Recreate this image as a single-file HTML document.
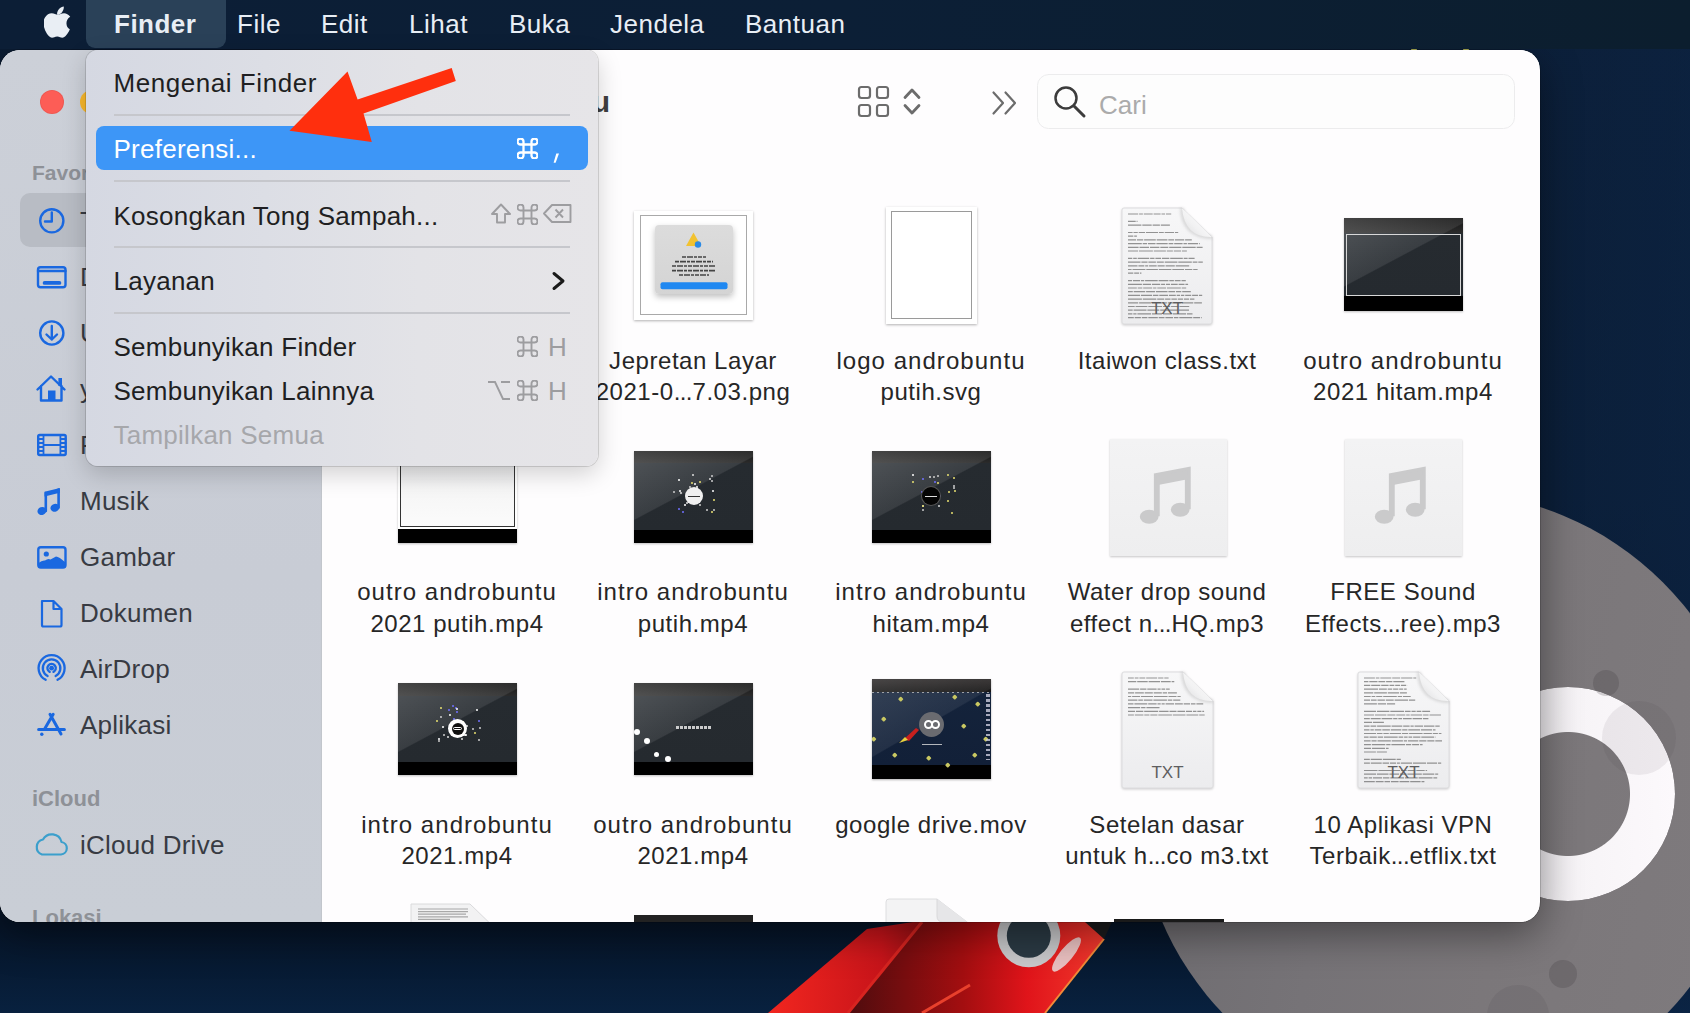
<!DOCTYPE html>
<html><head><meta charset="utf-8">
<style>
*{margin:0;padding:0;box-sizing:border-box}
html,body{width:1690px;height:1013px;overflow:hidden}
body{position:relative;font-family:"Liberation Sans",sans-serif;background:linear-gradient(90deg,rgba(13,38,72,0) 0px,rgba(13,38,72,0) 1300px,rgba(13,38,72,0.55) 1690px),linear-gradient(180deg,#0b1c33 0px,#0a1b31 500px,#061427 922px,#08213f 1013px)}
.abs{position:absolute}
#menubar{position:absolute;left:0;top:0;width:1690px;height:49px;background:linear-gradient(90deg,#0c1e36,#0c1f36 50%,#0c1e2e)}
.mb{position:absolute;top:9px;font-size:26px;line-height:30px;color:#e8eef5;white-space:nowrap;letter-spacing:0.5px}
#finderhl{position:absolute;left:86px;top:0;width:140px;height:48px;border-radius:0 0 9px 9px;background:#2a4158}
#win{position:absolute;left:0;top:50px;width:1540px;height:872px;border-radius:20px;overflow:hidden;background:#fefdfe;box-shadow:0 12px 40px rgba(0,0,0,0.42),0 0 0 1px rgba(0,0,0,0.15)}
#side{position:absolute;left:0;top:0;width:322px;border-right:1px solid #c2c6cc;height:872px;background:linear-gradient(180deg,#ccd0d8,#c8ccd5 60%,#c9ced6)}
.st{position:absolute;left:80px;font-size:26px;line-height:30px;color:#383b43;white-space:nowrap;letter-spacing:0.25px}
.sh{position:absolute;left:32px;font-size:21px;font-weight:bold;line-height:24px;color:#8e9197;white-space:nowrap}
.lbl{position:absolute;width:236px;text-align:center;font-size:24px;line-height:32.5px;color:#262626;white-space:nowrap;letter-spacing:0.55px}
.lbl i{font-style:normal;letter-spacing:-0.6px;margin-right:0.6px}
#menu{position:absolute;left:86px;top:50px;width:512px;height:416px;border-radius:12px;background:linear-gradient(90deg,#d5d8e2 0%,#dcdee5 35%,#e3e3e7 65%,#e6e5e8 100%);box-shadow:0 0 0 1px rgba(0,0,0,0.13),0 8px 24px rgba(0,0,0,0.18)}
.mi{position:absolute;left:27.5px;font-size:26px;line-height:30px;color:#1f1f22;white-space:nowrap;letter-spacing:0.25px}
.sep{position:absolute;left:28px;width:456px;height:2px;background:#c6c7cc}
</style></head><body>

<!-- moon -->
<div class="abs" style="left:1137px;top:492px;width:616px;height:616px;border-radius:50%;background:linear-gradient(100deg,#6c6a6e 0%,#767377 35%,#7b777a 60%,#7f7b7e 100%)"></div>


<div class="abs" style="left:1461px;top:687px;width:214px;height:214px;border-radius:50%;background:linear-gradient(90deg,#dcd9dd 0%,#ebe8ec 30%,#f7f4f7 55%,#fcf9fc 100%);-webkit-mask:radial-gradient(circle at center,transparent 61.5px,#000 62.5px)"></div>
<div class="abs" style="left:1602px;top:701px;width:74px;height:74px;border-radius:50%;background:rgba(50,46,50,0.075)"></div>
<div class="abs" style="left:1411px;top:46px;width:6px;height:5px;border-radius:2px;background:#c8c860"></div><div class="abs" style="left:1463px;top:46px;width:6px;height:5px;border-radius:2px;background:#c8c860"></div>
<div class="abs" style="left:1592.5px;top:670px;width:26px;height:26px;border-radius:50%;background:rgba(50,46,50,0.2)"></div>
<div class="abs" style="left:1549px;top:960px;width:28px;height:28px;border-radius:50%;background:rgba(50,46,50,0.2)"></div>
<div class="abs" style="left:1487px;top:985px;width:62px;height:62px;border-radius:50%;background:rgba(50,46,50,0.09)"></div>
<svg class="abs" style="left:700px;top:880px" width="560" height="140">
  <defs>
    <linearGradient id="rkf" x1="0" y1="0" x2="1" y2="0"><stop offset="0" stop-color="#f2261f"/><stop offset="0.55" stop-color="#c8141a"/><stop offset="1" stop-color="#5c0a0c"/></linearGradient>
    <linearGradient id="rkb" x1="0" y1="0" x2="1" y2="0"><stop offset="0" stop-color="#4e0c0e"/><stop offset="0.45" stop-color="#a30e10"/><stop offset="0.7" stop-color="#e0141a"/><stop offset="1" stop-color="#f23a2e"/></linearGradient>
  </defs>
  <polygon points="68,133 167,49 213,42 275,42 200,133" fill="url(#rkf)"/>
  <polygon points="148,133 222,42 395,42 404,59 345,133" fill="url(#rkb)"/>
  <path d="M222 42 L148 133" stroke="#d82420" stroke-width="3"/>
  <path d="M404 59 L345 133" stroke="#f28a38" stroke-width="2"/>
  <path d="M270 105 L222 133" stroke="#e8402c" stroke-width="3"/>
  <polygon points="385,42 412,42 404,59" fill="#1c1c1e"/>
  <circle cx="328.8" cy="55.8" r="31.5" fill="#c9c9cb"/>
  <circle cx="328.8" cy="55.8" r="22" fill="#2b3a44"/>
  <ellipse cx="366.5" cy="74.4" rx="6.5" ry="21.5" transform="rotate(39 366.5 74.4)" fill="#ead2d2" opacity="0.9"/>
</svg>
<!-- window -->
<div id="win">
  <div id="content" class="abs" style="left:322px;top:0;width:1217px;height:872px;background:#fefdfe"></div>
  <div class="abs" style="left:420px;top:35px;width:190px;text-align:right;font-size:30px;font-weight:bold;line-height:34px;color:#3f3f3f">Terbaru</div>
  <svg class="abs" style="left:0;top:0" width="1540" height="120" fill="none" stroke="#6c6c6c" stroke-linecap="round" stroke-linejoin="round">
    <rect x="859" y="37" width="11" height="11" rx="2.5" stroke-width="2.2"/>
    <rect x="877" y="37" width="11" height="11" rx="2.5" stroke-width="2.2"/>
    <rect x="859" y="55" width="11" height="11" rx="2.5" stroke-width="2.2"/>
    <rect x="877" y="55" width="11" height="11" rx="2.5" stroke-width="2.2"/>
    <path d="M905 47.5 L912 40 L919 47.5 M905 55.5 L912 63 L919 55.5" stroke-width="2.8"/>
    <path d="M993.5 42.5 L1003 53 L993.5 63.5 M1005.5 42.5 L1015 53 L1005.5 63.5" stroke-width="2.2"/>
    <rect x="1037.5" y="24.5" width="477" height="54" rx="11" fill="#fdfdfd" stroke="#ececed" stroke-width="1"/>
    <circle cx="1066" cy="48" r="10.5" stroke="#3c3c3c" stroke-width="2.5"/>
    <path d="M1074 56 L1084 66" stroke="#3c3c3c" stroke-width="3"/>
  </svg>
  <div class="abs" style="left:1099px;top:40px;font-size:26px;line-height:30px;color:#ababab">Cari</div>
<div class="lbl" style="left:575px;top:294.6px">Jepretan Layar</div>
<div class="lbl" style="left:575px;top:326.1px">2021-0<i>...</i>7.03.png</div>
<div class="lbl" style="left:813px;top:294.6px;letter-spacing:1.05px">logo androbuntu</div>
<div class="lbl" style="left:813px;top:326.1px">putih.svg</div>
<div class="lbl" style="left:1049px;top:294.6px">Itaiwon class.txt</div>
<div class="lbl" style="left:1285px;top:294.6px;letter-spacing:1.05px">outro androbuntu</div>
<div class="lbl" style="left:1285px;top:326.1px">2021 hitam.mp4</div>
<div class="lbl" style="left:339px;top:526.4px;letter-spacing:1.05px">outro androbuntu</div>
<div class="lbl" style="left:339px;top:557.8px">2021 putih.mp4</div>
<div class="lbl" style="left:575px;top:526.4px;letter-spacing:1.05px">intro androbuntu</div>
<div class="lbl" style="left:575px;top:557.8px">putih.mp4</div>
<div class="lbl" style="left:813px;top:526.4px;letter-spacing:1.05px">intro androbuntu</div>
<div class="lbl" style="left:813px;top:557.8px">hitam.mp4</div>
<div class="lbl" style="left:1049px;top:526.4px">Water drop sound</div>
<div class="lbl" style="left:1049px;top:557.8px">effect n<i>...</i>HQ.mp3</div>
<div class="lbl" style="left:1285px;top:526.4px">FREE Sound</div>
<div class="lbl" style="left:1285px;top:557.8px">Effects<i>...</i>ree).mp3</div>
<div class="lbl" style="left:339px;top:758.6px;letter-spacing:1.05px">intro androbuntu</div>
<div class="lbl" style="left:339px;top:790.1px">2021.mp4</div>
<div class="lbl" style="left:575px;top:758.6px;letter-spacing:1.05px">outro androbuntu</div>
<div class="lbl" style="left:575px;top:790.1px">2021.mp4</div>
<div class="lbl" style="left:813px;top:758.6px">google drive.mov</div>
<div class="lbl" style="left:1049px;top:758.6px">Setelan dasar</div>
<div class="lbl" style="left:1049px;top:790.1px">untuk h<i>...</i>co m3.txt</div>
<div class="lbl" style="left:1285px;top:758.6px">10 Aplikasi VPN</div>
<div class="lbl" style="left:1285px;top:790.1px">Terbaik<i>...</i>etflix.txt</div>
<div class="abs" style="left:634px;top:161px;width:119px;height:109px;background:#fff;box-shadow:0 1px 2.5px rgba(0,0,0,0.3)">
<div class="abs" style="left:6px;top:4px;width:107px;height:100px;border:1px solid #a9a9a9;background:#fff"></div>
<div class="abs" style="left:21px;top:14px;width:78px;height:69px;border-radius:4px;background:linear-gradient(180deg,#dcdcdc,#d4d4d4);box-shadow:0 3px 6px rgba(0,0,0,0.25)">
<svg class="abs" style="left:0;top:0" width="78" height="69"><path d="M38.5 7.5 L46 21 H31 Z" fill="#f2c230"/><circle cx="43" cy="19.5" r="3.2" fill="#2a8ae6"/>
<path d="M27 32 H51 M20 36.6 H58 M17 41 H61 M17 45.6 H61 M24 50 H54" stroke="#444" stroke-width="1.6" stroke-dasharray="4 1 6 1 3 1"/>
<rect x="5.5" y="57.2" width="67" height="7" rx="2" fill="#1f88f1"/></svg></div></div>
<div class="abs" style="left:886px;top:157px;width:91px;height:117px;background:#fff;box-shadow:0 1px 2.5px rgba(0,0,0,0.3)">
<div class="abs" style="left:5px;top:4px;width:81px;height:108px;border:1px solid #9a9a9a"></div></div>
<svg class="abs" style="left:1121px;top:156px;overflow:visible" width="92" height="119"><defs><linearGradient id="pg1121206" x1="0" y1="0" x2="0" y2="1"><stop offset="0" stop-color="#f7f7f8"/><stop offset="1" stop-color="#ececee"/></linearGradient><linearGradient id="fl1121206" x1="1" y1="0" x2="0" y2="1"><stop offset="0" stop-color="#ffffff"/><stop offset="0.6" stop-color="#f2f2f3"/><stop offset="1" stop-color="#d9d9db"/></linearGradient></defs><path d="M3 2 H61 L91 31 V116 Q91 118 89 118 H3 Q1 118 1 116 V4 Q1 2 3 2 Z" fill="url(#pg1121206)" stroke="#dcdcde" stroke-width="1" style="filter:drop-shadow(0 1px 1px rgba(0,0,0,0.18))"/><path d="M7.0 8.0 H17.2 M18.1 8.0 H21.9 M22.8 8.0 H31.7 M32.6 8.0 H39.6 M40.5 8.0 H44.1 M45.0 8.0 H50.2 M7.0 15.4 H14.7 M15.6 15.4 H16.5 M7.0 19.1 H20.4 M21.3 19.1 H30.7 M31.6 19.1 H38.9 M39.8 19.1 H48.9 M7.0 26.5 H11.6 M12.5 26.5 H16.8 M17.7 26.5 H24.1 M25.0 26.5 H37.0 M37.9 26.5 H42.8 M43.7 26.5 H53.1 M54.0 26.5 H57.2 M7.0 30.2 H12.3 M13.2 30.2 H15.9 M7.0 33.9 H15.0 M15.9 33.9 H22.2 M23.1 33.9 H34.8 M35.7 33.9 H46.4 M47.3 33.9 H53.0 M53.9 33.9 H63.2 M64.1 33.9 H70.8 M7.0 37.6 H20.8 M21.7 37.6 H26.0 M26.9 37.6 H34.5 M35.4 37.6 H46.7 M47.6 37.6 H52.3 M53.2 37.6 H61.6 M62.5 37.6 H65.9 M66.8 37.6 H77.1 M78.0 37.6 H78.8 M7.0 41.3 H17.6 M18.5 41.3 H28.1 M29.0 41.3 H38.4 M39.3 41.3 H47.3 M48.2 41.3 H60.4 M61.3 41.3 H74.7 M75.6 41.3 H81.6 M7.0 45.0 H17.1 M18.0 45.0 H31.9 M32.8 45.0 H44.9 M45.8 45.0 H51.9 M52.8 45.0 H60.1 M61.0 45.0 H65.9 M7.0 52.4 H11.3 M12.2 52.4 H15.8 M16.7 52.4 H28.2 M29.1 52.4 H33.5 M34.4 52.4 H40.1 M41.0 52.4 H48.3 M49.2 52.4 H61.8 M62.7 52.4 H66.6 M67.5 52.4 H73.6 M7.0 56.1 H19.5 M20.4 56.1 H26.5 M27.4 56.1 H34.9 M35.8 56.1 H42.8 M43.7 56.1 H56.4 M57.3 56.1 H70.8 M71.7 56.1 H76.4 M77.3 56.1 H81.8 M7.0 59.8 H16.5 M17.4 59.8 H23.3 M24.2 59.8 H27.2 M28.1 59.8 H35.7 M36.6 59.8 H43.7 M44.6 59.8 H53.8 M54.7 59.8 H68.2 M69.1 59.8 H69.2 M7.0 63.5 H10.6 M11.5 63.5 H24.4 M25.3 63.5 H36.9 M37.8 63.5 H50.4 M51.3 63.5 H63.1 M64.0 63.5 H71.3 M72.2 63.5 H76.6 M7.0 67.2 H12.3 M13.2 67.2 H18.0 M18.9 67.2 H20.4 M7.0 74.6 H11.1 M12.0 74.6 H19.0 M19.9 74.6 H23.2 M24.1 74.6 H36.7 M37.6 74.6 H47.4 M48.3 74.6 H52.9 M53.8 74.6 H59.6 M60.5 74.6 H64.8 M7.0 78.3 H20.9 M21.8 78.3 H30.0 M30.9 78.3 H39.2 M40.1 78.3 H44.0 M44.9 78.3 H49.0 M49.9 78.3 H56.7 M57.6 78.3 H63.5 M64.4 78.3 H67.1 M7.0 82.0 H15.8 M16.7 82.0 H21.3 M22.2 82.0 H31.2 M32.1 82.0 H35.4 M36.3 82.0 H45.1 M46.0 82.0 H59.8 M60.7 82.0 H65.2 M7.0 85.7 H11.8 M12.7 85.7 H24.2 M25.1 85.7 H34.0 M34.9 85.7 H46.5 M47.4 85.7 H54.0 M54.9 85.7 H60.3 M61.2 85.7 H69.8 M7.0 89.4 H19.0 M19.9 89.4 H31.0 M31.9 89.4 H37.4 M38.3 89.4 H47.0 M47.9 89.4 H54.8 M55.7 89.4 H59.1 M60.0 89.4 H63.3 M64.2 89.4 H70.2 M71.1 89.4 H77.0 M77.9 89.4 H81.2 M7.0 93.1 H20.9 M21.8 93.1 H35.3 M36.2 93.1 H43.2 M44.1 93.1 H49.5 M50.4 93.1 H55.9 M56.8 93.1 H62.0 M62.9 93.1 H68.1 M69.0 93.1 H73.4 M7.0 96.8 H17.2 M18.1 96.8 H29.9 M30.8 96.8 H34.7 M35.6 96.8 H45.9 M46.8 96.8 H59.8 M60.7 96.8 H72.3 M73.2 96.8 H80.9 M7.0 100.5 H13.7 M14.6 100.5 H26.4 M27.3 100.5 H41.0 M41.9 100.5 H49.2 M50.1 100.5 H57.5 M58.4 100.5 H68.2 M7.0 104.2 H11.7 M12.6 104.2 H25.5 M26.4 104.2 H38.3 M39.2 104.2 H43.8 M44.7 104.2 H56.8 M57.7 104.2 H68.0 M7.0 107.9 H11.4 M12.3 107.9 H15.5 M16.4 107.9 H30.1 M31.0 107.9 H41.1 M42.0 107.9 H50.8 M51.7 107.9 H65.0 M65.9 107.9 H71.5 M7.0 111.6 H12.8 M13.7 111.6 H19.9 M20.8 111.6 H26.4 M27.3 111.6 H36.8 M37.7 111.6 H43.5 M44.4 111.6 H52.1 M53.0 111.6 H57.4 M58.3 111.6 H71.3 M72.2 111.6 H79.1 M80.0 111.6 H80.7 " stroke="#6a6a6a" stroke-width="1.2" opacity="0.7"/><path d="M61 2 Q62 30 91 31" fill="none" stroke="rgba(0,0,0,0.12)" stroke-width="4" style="filter:blur(1.5px)"/><path d="M61 2 L91 31 Q64 32 61 2 Z" fill="url(#fl1121206)"/><text x="46.0" y="108" text-anchor="middle" font-family="Liberation Sans" font-size="17" fill="#5e5e60">TXT</text></svg>
<div class="abs" style="left:1344px;top:168px;width:119px;height:93px;box-shadow:0 1px 2px rgba(0,0,0,0.25);overflow:hidden"><div class="abs" style="left:0;top:0;width:119px;height:93px;background:linear-gradient(180deg,#151515 0,#2b2b2b 15px,#262b30 15px,#252a2f 78px,#000 78px,#000 100%)"></div><div class="abs" style="left:0;top:0;width:119px;height:78px;background:linear-gradient(152deg,rgba(255,255,255,0.2) 0%,rgba(255,255,255,0.09) 48%,rgba(255,255,255,0) 49%)"></div><div class="abs" style="left:2px;top:16px;width:115px;height:62px;border:1.5px solid #d8d8d8"></div></div>
<div class="abs" style="left:398px;top:416px;width:119px;height:77px;box-shadow:0 1px 2px rgba(0,0,0,0.25);overflow:hidden"><div class="abs" style="left:0;top:0;width:119px;height:63px;background:#fff"></div><div class="abs" style="left:2px;top:0;width:115px;height:61px;border:1.5px solid #333;border-top:none;background:linear-gradient(180deg,#e9e9ea,#f6f6f6 40%,#fbfbfb)"></div><div class="abs" style="left:0;top:63px;width:119px;height:14px;background:#000"></div></div>
<div class="abs" style="left:634px;top:401px;width:119px;height:92px;box-shadow:0 1px 2px rgba(0,0,0,0.25);overflow:hidden"><div class="abs" style="left:0;top:0;width:119px;height:92px;background:linear-gradient(180deg,#151515 0,#2b2b2b 12px,#262b30 12px,#252a2f 79px,#000 79px,#000 100%)"></div><div class="abs" style="left:0;top:0;width:119px;height:79px;background:linear-gradient(152deg,rgba(255,255,255,0.2) 0%,rgba(255,255,255,0.09) 48%,rgba(255,255,255,0) 49%)"></div><div class="abs" style="left:78px;top:39px;width:1.5px;height:1.5px;opacity:.75;background:#fff"></div><div class="abs" style="left:44px;top:28px;width:1.5px;height:1.5px;opacity:.75;background:#fff"></div><div class="abs" style="left:39px;top:40px;width:1.5px;height:1.5px;opacity:.75;background:#ccc"></div><div class="abs" style="left:65px;top:53px;width:1.5px;height:1.5px;opacity:.75;background:#ccc"></div><div class="abs" style="left:46px;top:41px;width:1.5px;height:1.5px;opacity:.75;background:#ddd"></div><div class="abs" style="left:62px;top:35px;width:1.5px;height:1.5px;opacity:.75;background:#fff"></div><div class="abs" style="left:61px;top:41px;width:1.5px;height:1.5px;opacity:.75;background:#ddd"></div><div class="abs" style="left:77px;top:24px;width:1.5px;height:1.5px;opacity:.75;background:#ccc"></div><div class="abs" style="left:50px;top:53px;width:1.5px;height:1.5px;opacity:.75;background:#fff"></div><div class="abs" style="left:58px;top:23px;width:1.5px;height:1.5px;opacity:.75;background:#ddd"></div><div class="abs" style="left:58px;top:47px;width:1.5px;height:1.5px;opacity:.75;background:#fff"></div><div class="abs" style="left:65px;top:30px;width:1.5px;height:1.5px;opacity:.75;background:#e8e070"></div><div class="abs" style="left:58px;top:43px;width:1.5px;height:1.5px;opacity:.75;background:#7070ff"></div><div class="abs" style="left:60px;top:32px;width:1.5px;height:1.5px;opacity:.75;background:#fff"></div><div class="abs" style="left:77px;top:60px;width:1.5px;height:1.5px;opacity:.75;background:#e8e070"></div><div class="abs" style="left:79px;top:58px;width:1.5px;height:1.5px;opacity:.75;background:#ccc"></div><div class="abs" style="left:75px;top:27px;width:1.5px;height:1.5px;opacity:.75;background:#ddd"></div><div class="abs" style="left:55px;top:35px;width:1.5px;height:1.5px;opacity:.75;background:#ccc"></div><div class="abs" style="left:57px;top:31px;width:1.5px;height:1.5px;opacity:.75;background:#e8e070"></div><div class="abs" style="left:72px;top:58px;width:1.5px;height:1.5px;opacity:.75;background:#ccc"></div><div class="abs" style="left:79px;top:48px;width:1.5px;height:1.5px;opacity:.75;background:#e8e070"></div><div class="abs" style="left:44px;top:57px;width:1.5px;height:1.5px;opacity:.75;background:#7070ff"></div><div class="abs" style="left:48px;top:60px;width:1.5px;height:1.5px;opacity:.75;background:#7070ff"></div><div class="abs" style="left:77px;top:29px;width:1.5px;height:1.5px;opacity:.75;background:#ccc"></div><div class="abs" style="left:45px;top:39px;width:1.5px;height:1.5px;opacity:.75;background:#fff"></div><div class="abs" style="left:56px;top:39px;width:1.5px;height:1.5px;opacity:.75;background:#e8e070"></div><div class="abs" style="left:52px;top:51px;width:1.5px;height:1.5px;opacity:.75;background:#ddd"></div><div class="abs" style="left:53px;top:40px;width:1.5px;height:1.5px;opacity:.75;background:#ddd"></div><div class="abs" style="left:51px;top:36px;width:18px;height:18px;border-radius:50%;background:#f0f0f0"></div><div class="abs" style="left:54px;top:44.5px;width:12px;height:1.5px;background:#333"></div></div>
<div class="abs" style="left:872px;top:401px;width:119px;height:92px;box-shadow:0 1px 2px rgba(0,0,0,0.25);overflow:hidden"><div class="abs" style="left:0;top:0;width:119px;height:92px;background:linear-gradient(180deg,#151515 0,#2b2b2b 12px,#262b30 12px,#252a2f 79px,#000 79px,#000 100%)"></div><div class="abs" style="left:0;top:0;width:119px;height:79px;background:linear-gradient(152deg,rgba(255,255,255,0.2) 0%,rgba(255,255,255,0.09) 48%,rgba(255,255,255,0) 49%)"></div><div class="abs" style="left:55px;top:43px;width:1.5px;height:1.5px;opacity:.75;background:#e8e070"></div><div class="abs" style="left:61px;top:25px;width:1.5px;height:1.5px;opacity:.75;background:#ccc"></div><div class="abs" style="left:81px;top:26px;width:1.5px;height:1.5px;opacity:.75;background:#e8e070"></div><div class="abs" style="left:50px;top:58px;width:1.5px;height:1.5px;opacity:.75;background:#ccc"></div><div class="abs" style="left:50px;top:27px;width:1.5px;height:1.5px;opacity:.75;background:#7070ff"></div><div class="abs" style="left:75px;top:49px;width:1.5px;height:1.5px;opacity:.75;background:#e8e070"></div><div class="abs" style="left:56px;top:43px;width:1.5px;height:1.5px;opacity:.75;background:#fff"></div><div class="abs" style="left:63px;top:50px;width:1.5px;height:1.5px;opacity:.75;background:#ddd"></div><div class="abs" style="left:50px;top:54px;width:1.5px;height:1.5px;opacity:.75;background:#ccc"></div><div class="abs" style="left:57px;top:25px;width:1.5px;height:1.5px;opacity:.75;background:#ddd"></div><div class="abs" style="left:66px;top:54px;width:1.5px;height:1.5px;opacity:.75;background:#ddd"></div><div class="abs" style="left:65px;top:31px;width:1.5px;height:1.5px;opacity:.75;background:#e8e070"></div><div class="abs" style="left:76px;top:40px;width:1.5px;height:1.5px;opacity:.75;background:#e8e070"></div><div class="abs" style="left:82px;top:39px;width:1.5px;height:1.5px;opacity:.75;background:#e8e070"></div><div class="abs" style="left:65px;top:24px;width:1.5px;height:1.5px;opacity:.75;background:#ccc"></div><div class="abs" style="left:79px;top:61px;width:1.5px;height:1.5px;opacity:.75;background:#e8e070"></div><div class="abs" style="left:40px;top:30px;width:1.5px;height:1.5px;opacity:.75;background:#e8e070"></div><div class="abs" style="left:66px;top:43px;width:1.5px;height:1.5px;opacity:.75;background:#ccc"></div><div class="abs" style="left:51px;top:42px;width:1.5px;height:1.5px;opacity:.75;background:#ccc"></div><div class="abs" style="left:50px;top:54px;width:1.5px;height:1.5px;opacity:.75;background:#e8e070"></div><div class="abs" style="left:40px;top:23px;width:1.5px;height:1.5px;opacity:.75;background:#fff"></div><div class="abs" style="left:62px;top:30px;width:1.5px;height:1.5px;opacity:.75;background:#7070ff"></div><div class="abs" style="left:49px;top:40px;width:1.5px;height:1.5px;opacity:.75;background:#7070ff"></div><div class="abs" style="left:67px;top:44px;width:1.5px;height:1.5px;opacity:.75;background:#7070ff"></div><div class="abs" style="left:81px;top:34px;width:1.5px;height:1.5px;opacity:.75;background:#ccc"></div><div class="abs" style="left:81px;top:36px;width:1.5px;height:1.5px;opacity:.75;background:#ccc"></div><div class="abs" style="left:56px;top:36px;width:1.5px;height:1.5px;opacity:.75;background:#ddd"></div><div class="abs" style="left:75px;top:23px;width:1.5px;height:1.5px;opacity:.75;background:#e8e070"></div><div class="abs" style="left:50px;top:36px;width:18px;height:18px;border-radius:50%;background:#050505;box-shadow:0 0 0 1px #555"></div><div class="abs" style="left:53px;top:44.5px;width:12px;height:1.5px;background:#ddd"></div></div>
<div class="abs" style="left:1110px;top:389px;width:117px;height:117px;background:linear-gradient(180deg,#f3f3f4,#eeeeef);box-shadow:0 1px 2px rgba(0,0,0,0.22)"><svg class="abs" style="left:0;top:0" width="117" height="117"><g fill="#cacacb" stroke="#cacacb"><path d="M46.800000000000004 77.22 V36.855 L77.805 31.005000000000003 V70.2" fill="none" stroke-width="5.8500000000000005"/><path d="M46.800000000000004 36.855 L77.805 31.005000000000003 V40.364999999999995 L46.800000000000004 46.215 Z" stroke="none"/><ellipse cx="39.195" cy="77.805" rx="9.36" ry="7.02" stroke="none"/><ellipse cx="70.2" cy="70.785" rx="9.36" ry="7.02" stroke="none"/></g></svg></div>
<div class="abs" style="left:1345px;top:389px;width:117px;height:117px;background:linear-gradient(180deg,#f3f3f4,#eeeeef);box-shadow:0 1px 2px rgba(0,0,0,0.22)"><svg class="abs" style="left:0;top:0" width="117" height="117"><g fill="#cacacb" stroke="#cacacb"><path d="M46.800000000000004 77.22 V36.855 L77.805 31.005000000000003 V70.2" fill="none" stroke-width="5.8500000000000005"/><path d="M46.800000000000004 36.855 L77.805 31.005000000000003 V40.364999999999995 L46.800000000000004 46.215 Z" stroke="none"/><ellipse cx="39.195" cy="77.805" rx="9.36" ry="7.02" stroke="none"/><ellipse cx="70.2" cy="70.785" rx="9.36" ry="7.02" stroke="none"/></g></svg></div>
<div class="abs" style="left:398px;top:633px;width:119px;height:92px;box-shadow:0 1px 2px rgba(0,0,0,0.25);overflow:hidden"><div class="abs" style="left:0;top:0;width:119px;height:92px;background:linear-gradient(180deg,#151515 0,#2b2b2b 13px,#262b30 13px,#252a2f 79px,#000 79px,#000 100%)"></div><div class="abs" style="left:0;top:0;width:119px;height:79px;background:linear-gradient(152deg,rgba(255,255,255,0.2) 0%,rgba(255,255,255,0.09) 48%,rgba(255,255,255,0) 49%)"></div><div class="abs" style="left:57px;top:24px;width:1.5px;height:1.5px;opacity:.75;background:#7070ff"></div><div class="abs" style="left:76px;top:49px;width:1.5px;height:1.5px;opacity:.75;background:#e8e070"></div><div class="abs" style="left:64px;top:50px;width:1.5px;height:1.5px;opacity:.75;background:#ddd"></div><div class="abs" style="left:58px;top:28px;width:1.5px;height:1.5px;opacity:.75;background:#7070ff"></div><div class="abs" style="left:38px;top:37px;width:1.5px;height:1.5px;opacity:.75;background:#e8e070"></div><div class="abs" style="left:81px;top:44px;width:1.5px;height:1.5px;opacity:.75;background:#ccc"></div><div class="abs" style="left:40px;top:57px;width:1.5px;height:1.5px;opacity:.75;background:#ccc"></div><div class="abs" style="left:54px;top:22px;width:1.5px;height:1.5px;opacity:.75;background:#7070ff"></div><div class="abs" style="left:42px;top:33px;width:1.5px;height:1.5px;opacity:.75;background:#ccc"></div><div class="abs" style="left:49px;top:53px;width:1.5px;height:1.5px;opacity:.75;background:#ddd"></div><div class="abs" style="left:50px;top:26px;width:1.5px;height:1.5px;opacity:.75;background:#7070ff"></div><div class="abs" style="left:64px;top:38px;width:1.5px;height:1.5px;opacity:.75;background:#e8e070"></div><div class="abs" style="left:51px;top:31px;width:1.5px;height:1.5px;opacity:.75;background:#fff"></div><div class="abs" style="left:80px;top:56px;width:1.5px;height:1.5px;opacity:.75;background:#ccc"></div><div class="abs" style="left:67px;top:51px;width:1.5px;height:1.5px;opacity:.75;background:#fff"></div><div class="abs" style="left:55px;top:35px;width:1.5px;height:1.5px;opacity:.75;background:#7070ff"></div><div class="abs" style="left:45px;top:51px;width:1.5px;height:1.5px;opacity:.75;background:#ccc"></div><div class="abs" style="left:40px;top:55px;width:1.5px;height:1.5px;opacity:.75;background:#fff"></div><div class="abs" style="left:66px;top:51px;width:1.5px;height:1.5px;opacity:.75;background:#fff"></div><div class="abs" style="left:44px;top:43px;width:1.5px;height:1.5px;opacity:.75;background:#fff"></div><div class="abs" style="left:63px;top:55px;width:1.5px;height:1.5px;opacity:.75;background:#ddd"></div><div class="abs" style="left:74px;top:45px;width:1.5px;height:1.5px;opacity:.75;background:#ccc"></div><div class="abs" style="left:42px;top:24px;width:1.5px;height:1.5px;opacity:.75;background:#e8e070"></div><div class="abs" style="left:80px;top:37px;width:1.5px;height:1.5px;opacity:.75;background:#7070ff"></div><div class="abs" style="left:63px;top:47px;width:1.5px;height:1.5px;opacity:.75;background:#fff"></div><div class="abs" style="left:68px;top:42px;width:1.5px;height:1.5px;opacity:.75;background:#ddd"></div><div class="abs" style="left:58px;top:25px;width:1.5px;height:1.5px;opacity:.75;background:#fff"></div><div class="abs" style="left:78px;top:26px;width:1.5px;height:1.5px;opacity:.75;background:#fff"></div><div class="abs" style="left:50px;top:36px;width:19px;height:19px;border-radius:50%;background:#fff"></div><div class="abs" style="left:53.5px;top:39.5px;width:12px;height:12px;border-radius:50%;background:#111"></div><div class="abs" style="left:55px;top:44px;width:9px;height:3px;border:1px solid #fff;border-radius:2px"></div></div>
<div class="abs" style="left:634px;top:633px;width:119px;height:92px;box-shadow:0 1px 2px rgba(0,0,0,0.25);overflow:hidden"><div class="abs" style="left:0;top:0;width:119px;height:92px;background:linear-gradient(180deg,#151515 0,#2b2b2b 13px,#262b30 13px,#252a2f 79px,#000 79px,#000 100%)"></div><div class="abs" style="left:0;top:0;width:119px;height:79px;background:linear-gradient(152deg,rgba(255,255,255,0.2) 0%,rgba(255,255,255,0.09) 48%,rgba(255,255,255,0) 49%)"></div><div class="abs" style="left:42px;top:43px;width:36px;height:3px;background:repeating-linear-gradient(90deg,#ddd 0 3px,transparent 3px 4px);opacity:.9"></div><div class="abs" style="left:0px;top:46px;width:6px;height:6px;border-radius:50%;background:#fff"></div><div class="abs" style="left:10px;top:55px;width:6px;height:6px;border-radius:50%;background:#fff"></div><div class="abs" style="left:20px;top:69px;width:5px;height:5px;border-radius:50%;background:#fff"></div><div class="abs" style="left:31px;top:73px;width:6px;height:6px;border-radius:50%;background:#fff"></div></div>
<div class="abs" style="left:872px;top:629px;width:119px;height:100px;background:linear-gradient(180deg,#2b2828 0,#161515 13px,#14233b 13px,#122038 86px,#010101 86px);box-shadow:0 1px 2px rgba(0,0,0,0.3);overflow:hidden">
<div class="abs" style="left:0;top:0;width:119px;height:86px;background:linear-gradient(150deg,rgba(255,255,255,0.14) 0%,rgba(255,255,255,0.07) 50%,rgba(255,255,255,0) 51%)"></div><div class="abs" style="left:26.9px;top:18.0px;width:3.5px;height:3.5px;background:#c9c862;border-radius:1px;transform:rotate(45deg)"></div><div class="abs" style="left:80.8px;top:16.2px;width:3.5px;height:3.5px;background:#c9c862;border-radius:1px;transform:rotate(45deg)"></div><div class="abs" style="left:104.4px;top:22.8px;width:3.5px;height:3.5px;background:#c9c862;border-radius:1px;transform:rotate(45deg)"></div><div class="abs" style="left:10.3px;top:38.2px;width:3.5px;height:3.5px;background:#c9c862;border-radius:1px;transform:rotate(45deg)"></div><div class="abs" style="left:90.2px;top:45.3px;width:3.5px;height:3.5px;background:#c9c862;border-radius:1px;transform:rotate(45deg)"></div><div class="abs" style="left:0.2px;top:57.7px;width:3.5px;height:3.5px;background:#c9c862;border-radius:1px;transform:rotate(45deg)"></div><div class="abs" style="left:20.9px;top:74.3px;width:3.5px;height:3.5px;background:#c9c862;border-radius:1px;transform:rotate(45deg)"></div><div class="abs" style="left:54.7px;top:76.6px;width:3.5px;height:3.5px;background:#c9c862;border-radius:1px;transform:rotate(45deg)"></div><div class="abs" style="left:74.2px;top:83.8px;width:3.5px;height:3.5px;background:#c9c862;border-radius:1px;transform:rotate(45deg)"></div><div class="abs" style="left:100.9px;top:74.3px;width:3.5px;height:3.5px;background:#c9c862;border-radius:1px;transform:rotate(45deg)"></div><div class="abs" style="left:111.5px;top:57.7px;width:3.5px;height:3.5px;background:#c9c862;border-radius:1px;transform:rotate(45deg)"></div>
<div class="abs" style="left:0;top:12.5px;width:119px;height:1px;background:repeating-linear-gradient(90deg,#bbb 0 2px,transparent 2px 5px);opacity:.8"></div>
<div class="abs" style="left:114px;top:15px;width:4px;height:66px;background:repeating-linear-gradient(180deg,#ccd 0 2.5px,transparent 2.5px 5px);opacity:.8"></div>
<div class="abs" style="left:47.3px;top:32.5px;width:25px;height:25px;border-radius:50%;background:#6a6b70"></div>
<div class="abs" style="left:52px;top:40.5px;width:9px;height:9px;border-radius:50%;border:2px solid #fff"></div><div class="abs" style="left:59px;top:40.5px;width:9px;height:9px;border-radius:50%;border:2px solid #fff"></div>
<svg class="abs" style="left:0;top:0" width="119" height="100"><path d="M32 60 L44 49 L47 51 L37 62 Z" fill="#c8201e"/><path d="M27 64 L33 58 L36 61 Z" fill="#e8d040"/></svg>
<div class="abs" style="left:50px;top:64.5px;width:20px;height:1.5px;background:#ddd;opacity:.8"></div></div>
<svg class="abs" style="left:1121px;top:620px;overflow:visible" width="93" height="119"><defs><linearGradient id="pg1121670" x1="0" y1="0" x2="0" y2="1"><stop offset="0" stop-color="#f7f7f8"/><stop offset="1" stop-color="#ececee"/></linearGradient><linearGradient id="fl1121670" x1="1" y1="0" x2="0" y2="1"><stop offset="0" stop-color="#ffffff"/><stop offset="0.6" stop-color="#f2f2f3"/><stop offset="1" stop-color="#d9d9db"/></linearGradient></defs><path d="M3 2 H62 L92 31 V116 Q92 118 90 118 H3 Q1 118 1 116 V4 Q1 2 3 2 Z" fill="url(#pg1121670)" stroke="#dcdcde" stroke-width="1" style="filter:drop-shadow(0 1px 1px rgba(0,0,0,0.18))"/><path d="M7.0 8.0 H12.8 M13.7 8.0 H17.5 M18.4 8.0 H24.3 M25.2 8.0 H36.2 M37.1 8.0 H42.4 M43.3 8.0 H47.6 M7.0 11.7 H15.3 M16.2 11.7 H26.7 M27.6 11.7 H39.0 M39.9 11.7 H49.7 M50.6 11.7 H53.3 M7.0 19.1 H18.2 M19.1 19.1 H25.4 M26.3 19.1 H35.6 M36.5 19.1 H39.6 M40.5 19.1 H44.2 M45.1 19.1 H48.7 M7.0 22.8 H13.2 M14.1 22.8 H22.8 M23.7 22.8 H31.8 M32.7 22.8 H40.8 M41.7 22.8 H46.0 M46.9 22.8 H55.9 M7.0 26.5 H10.2 M11.1 26.5 H19.1 M20.0 26.5 H32.1 M33.0 26.5 H46.6 M47.5 26.5 H55.5 M56.4 26.5 H59.7 M7.0 30.2 H16.4 M17.3 30.2 H21.9 M22.8 30.2 H31.5 M32.4 30.2 H45.9 M46.8 30.2 H51.3 M52.2 30.2 H59.3 M7.0 33.9 H12.5 M13.4 33.9 H26.3 M27.2 33.9 H35.6 M36.5 33.9 H39.7 M40.6 33.9 H43.7 M44.6 33.9 H53.0 M53.9 33.9 H61.8 M62.7 33.9 H69.1 M70.0 33.9 H74.5 M75.4 33.9 H82.2 M7.0 37.6 H19.2 M20.1 37.6 H24.5 M25.4 37.6 H38.5 M7.0 41.3 H14.1 M15.0 41.3 H22.3 M23.2 41.3 H37.2 M38.1 41.3 H47.6 M48.5 41.3 H55.5 M56.4 41.3 H64.1 M65.0 41.3 H71.0 M71.9 41.3 H75.4 M76.3 41.3 H80.4 M81.3 41.3 H83.1 M7.0 45.0 H12.9 M13.8 45.0 H22.4 M23.3 45.0 H28.4 M29.3 45.0 H36.4 M37.3 45.0 H50.9 M51.8 45.0 H64.5 M65.4 45.0 H77.3 M78.2 45.0 H83.7 " stroke="#6a6a6a" stroke-width="1.2" opacity="0.7"/><path d="M62 2 Q63 30 92 31" fill="none" stroke="rgba(0,0,0,0.12)" stroke-width="4" style="filter:blur(1.5px)"/><path d="M62 2 L92 31 Q65 32 62 2 Z" fill="url(#fl1121670)"/><text x="46.5" y="108" text-anchor="middle" font-family="Liberation Sans" font-size="17" fill="#5e5e60">TXT</text></svg>
<svg class="abs" style="left:1357px;top:620px;overflow:visible" width="93" height="119"><defs><linearGradient id="pg1357670" x1="0" y1="0" x2="0" y2="1"><stop offset="0" stop-color="#f7f7f8"/><stop offset="1" stop-color="#ececee"/></linearGradient><linearGradient id="fl1357670" x1="1" y1="0" x2="0" y2="1"><stop offset="0" stop-color="#ffffff"/><stop offset="0.6" stop-color="#f2f2f3"/><stop offset="1" stop-color="#d9d9db"/></linearGradient></defs><path d="M3 2 H62 L92 31 V116 Q92 118 90 118 H3 Q1 118 1 116 V4 Q1 2 3 2 Z" fill="url(#pg1357670)" stroke="#dcdcde" stroke-width="1" style="filter:drop-shadow(0 1px 1px rgba(0,0,0,0.18))"/><path d="M7.0 8.0 H17.9 M18.8 8.0 H22.4 M23.3 8.0 H34.3 M35.2 8.0 H43.2 M44.1 8.0 H55.4 M56.3 8.0 H59.2 M7.0 11.7 H11.4 M12.3 11.7 H20.5 M21.4 11.7 H28.2 M29.1 11.7 H35.4 M36.3 11.7 H47.4 M7.0 15.4 H13.3 M14.2 15.4 H23.3 M24.2 15.4 H31.6 M32.5 15.4 H37.3 M38.2 15.4 H43.0 M43.9 15.4 H49.2 M50.1 15.4 H50.2 M7.0 19.1 H21.0 M21.9 19.1 H29.8 M30.7 19.1 H35.2 M36.1 19.1 H41.3 M42.2 19.1 H46.2 M47.1 19.1 H49.7 M7.0 22.8 H16.3 M17.2 22.8 H29.9 M30.8 22.8 H42.1 M43.0 22.8 H49.9 M7.0 26.5 H13.7 M14.6 26.5 H18.3 M19.2 26.5 H25.3 M26.2 26.5 H39.8 M40.7 26.5 H45.1 M46.0 26.5 H53.7 M7.0 30.2 H13.0 M13.9 30.2 H19.6 M20.5 30.2 H27.9 M28.8 30.2 H36.7 M37.6 30.2 H51.1 M52.0 30.2 H58.2 M7.0 33.9 H19.9 M20.8 33.9 H29.0 M29.9 33.9 H38.1 M7.0 41.3 H19.1 M20.0 41.3 H32.4 M33.3 41.3 H47.0 M47.9 41.3 H53.6 M54.5 41.3 H58.7 M59.6 41.3 H64.3 M65.2 41.3 H73.1 M7.0 45.0 H17.1 M18.0 45.0 H29.4 M30.3 45.0 H38.4 M39.3 45.0 H48.3 M49.2 45.0 H52.7 M53.6 45.0 H65.2 M66.1 45.0 H71.6 M72.5 45.0 H83.9 M7.0 48.7 H12.8 M13.7 48.7 H23.7 M24.6 48.7 H35.3 M36.2 48.7 H40.4 M41.3 48.7 H45.1 M46.0 48.7 H54.7 M55.6 48.7 H65.0 M65.9 48.7 H71.4 M7.0 52.4 H15.1 M16.0 52.4 H26.9 M7.0 56.1 H12.6 M13.5 56.1 H19.2 M20.1 56.1 H33.7 M34.6 56.1 H45.3 M46.2 56.1 H52.6 M53.5 56.1 H56.7 M57.6 56.1 H66.1 M67.0 56.1 H77.4 M78.3 56.1 H82.7 M7.0 59.8 H12.5 M13.4 59.8 H16.8 M17.7 59.8 H24.4 M25.3 59.8 H32.9 M33.8 59.8 H44.3 M45.2 59.8 H50.4 M51.3 59.8 H63.1 M64.0 59.8 H75.1 M76.0 59.8 H78.5 M7.0 63.5 H19.0 M19.9 63.5 H25.5 M26.4 63.5 H31.8 M32.7 63.5 H44.1 M45.0 63.5 H51.2 M52.1 63.5 H65.6 M66.5 63.5 H74.9 M75.8 63.5 H80.9 M81.8 63.5 H84.4 M7.0 67.2 H11.6 M12.5 67.2 H19.8 M20.7 67.2 H26.1 M27.0 67.2 H40.7 M41.6 67.2 H46.2 M47.1 67.2 H50.6 M51.5 67.2 H55.2 M56.1 67.2 H63.4 M64.3 67.2 H77.2 M78.1 67.2 H78.5 M7.0 70.9 H13.6 M14.5 70.9 H19.6 M20.5 70.9 H33.8 M34.7 70.9 H45.9 M46.8 70.9 H50.1 M51.0 70.9 H61.3 M62.2 70.9 H69.4 M70.3 70.9 H77.4 M78.3 70.9 H85.0 M7.0 74.6 H13.9 M14.8 74.6 H28.3 M29.2 74.6 H33.5 M34.4 74.6 H48.0 M48.9 74.6 H54.2 M55.1 74.6 H62.0 M62.9 74.6 H65.6 M7.0 78.3 H14.1 M15.0 78.3 H28.1 M29.0 78.3 H31.6 M7.0 82.0 H18.9 M19.8 82.0 H29.9 M7.0 89.4 H12.8 M13.7 89.4 H24.9 M25.8 89.4 H38.7 M39.6 89.4 H43.8 M7.0 93.1 H12.9 M13.8 93.1 H24.7 M25.6 93.1 H32.0 M32.9 93.1 H39.0 M39.9 93.1 H42.9 M43.8 93.1 H55.1 M56.0 93.1 H69.1 M70.0 93.1 H80.0 M80.9 93.1 H84.2 M7.0 100.5 H20.5 M21.4 100.5 H34.9 M35.8 100.5 H43.1 M44.0 100.5 H49.7 M50.6 100.5 H58.4 M59.3 100.5 H67.7 M68.6 100.5 H70.1 M7.0 104.2 H19.1 M20.0 104.2 H31.5 M32.4 104.2 H42.0 M42.9 104.2 H49.5 M50.4 104.2 H57.0 M57.9 104.2 H64.8 M65.7 104.2 H77.3 M78.2 104.2 H81.2 M7.0 107.9 H10.7 M11.6 107.9 H15.0 M15.9 107.9 H25.0 M25.9 107.9 H32.4 M33.3 107.9 H47.1 M48.0 107.9 H60.7 M61.6 107.9 H75.5 M76.4 107.9 H80.2 M7.0 111.6 H17.8 M18.7 111.6 H26.6 M27.5 111.6 H33.1 M34.0 111.6 H41.6 M42.5 111.6 H52.3 M53.2 111.6 H63.6 M64.5 111.6 H67.4 " stroke="#6a6a6a" stroke-width="1.2" opacity="0.7"/><path d="M62 2 Q63 30 92 31" fill="none" stroke="rgba(0,0,0,0.12)" stroke-width="4" style="filter:blur(1.5px)"/><path d="M62 2 L92 31 Q65 32 62 2 Z" fill="url(#fl1357670)"/><text x="46.5" y="108" text-anchor="middle" font-family="Liberation Sans" font-size="17" fill="#5e5e60">TXT</text></svg>
<svg class="abs" style="left:410px;top:853px" width="92" height="30"><path d="M1 1 H60 L90 30 H1 Z" fill="#f2f2f3" stroke="#dadadc"/><path d="M8 6 H58 M8 8.6 H58 M8 11.2 H56 M8 13.8 H58 M8 16.4 H40" stroke="#777" stroke-width="1.2" opacity="0.6"/></svg>
<div class="abs" style="left:634px;top:865px;width:119px;height:20px;background:#222"></div>
<svg class="abs" style="left:885px;top:848px" width="92" height="30"><path d="M1 4 Q1 1 4 1 H52 L90 30 H1 Z" fill="#f3f3f4" stroke="#dedee0"/><path d="M52 1 V18 Q52 24 58 24 H82" fill="#e6e6e8" stroke="#d8d8da"/></svg>
<div class="abs" style="left:1114px;top:869px;width:110px;height:10px;background:#1a1a1a"></div>
  <div id="side">
    <div class="abs" style="left:40px;top:40px;width:24px;height:24px;border-radius:50%;background:#fd5d56;box-shadow:inset 0 0 0 1px rgba(0,0,0,0.06)"></div>
    <div class="abs" style="left:80px;top:40px;width:24px;height:24px;border-radius:50%;background:#f8b72b"></div>
    <div class="sh" style="top:111px">Favorit</div>
    <div class="abs" style="left:20px;top:143px;width:290px;height:54px;border-radius:10px;background:#b8bcc4"></div>
    <div class="st" style="top:156px">Terbaru</div>
    <div class="st" style="top:212px">Desktop</div>
    <div class="st" style="top:268px">Unduhan</div>
    <div class="st" style="top:324px">yoga</div>
    <div class="st" style="top:380px">Film</div>
    <div class="st" style="top:436px">Musik</div>
    <div class="st" style="top:492px">Gambar</div>
    <div class="st" style="top:548px">Dokumen</div>
    <div class="st" style="top:604px">AirDrop</div>
    <div class="st" style="top:660px">Aplikasi</div>
    <div class="sh" style="top:736.5px;font-size:22px">iCloud</div>
    <div class="st" style="top:780px">iCloud Drive</div>
    <div class="sh" style="top:856px;font-size:22px">Lokasi</div>
    <svg class="abs" style="left:0;top:0" width="323" height="872" fill="none" stroke="#1a68e0" stroke-width="2.4" stroke-linecap="round" stroke-linejoin="round">
      <!-- clock (51.8,220.8) -> win y 170.8 -->
      <circle cx="51.8" cy="170.8" r="11.6"/>
      <path d="M51.8 162.5 V171.5 H45"/>
      <!-- desktop -->
      <rect x="38" y="217.3" width="27.5" height="20" rx="2.5"/>
      <path d="M38 221 H65.5"/>
      <rect x="42.7" y="231" width="18.6" height="3.8" rx="1.9" fill="#1a68e0" stroke="none"/>
      <!-- download -->
      <circle cx="51.8" cy="283" r="11.6"/>
      <path d="M51.8 276 V289.5 M46.5 284.5 L51.8 289.5 L57 284.5"/>
      <!-- home -->
      <path d="M37.5 339.5 L51 326.5 L64.5 339.5 M41 336 V350.5 H61.5 V336"/>
      <rect x="58.4" y="328" width="3.6" height="8" fill="#1a68e0" stroke="none"/>
      <rect x="48" y="340.5" width="7.5" height="10" fill="#1a68e0" stroke="none"/>
      <!-- movies -->
      <rect x="38.2" y="385" width="27.5" height="20" rx="1.5"/>
      <path d="M43.5 385 V405 M60.4 385 V405 M43.5 395 H60.4 M38.2 389 H43.5 M38.2 393 H43.5 M38.2 397 H43.5 M38.2 401 H43.5 M60.4 389 H65.7 M60.4 393 H65.7 M60.4 397 H65.7 M60.4 401 H65.7" stroke-width="1.8"/>
      <!-- music -->
      <path d="M45.8 461 V443 M58.6 457.5 V439.5" stroke-width="2.6"/>
      <polygon points="44.5,441.8 59.9,437.9 59.9,442.8 44.5,446.6" fill="#1a68e0" stroke="none"/>
      <ellipse cx="41.9" cy="461" rx="4.5" ry="3.9" transform="rotate(-20 41.9 461)" fill="#1a68e0" stroke="none"/>
      <ellipse cx="54.9" cy="457.8" rx="4.5" ry="3.9" transform="rotate(-20 54.9 457.8)" fill="#1a68e0" stroke="none"/>
      <!-- gambar -->
      <rect x="38.3" y="497.2" width="27.2" height="20.3" rx="2.5" stroke-width="2.4"/>
      <circle cx="46.3" cy="504" r="2.6" fill="#1a68e0" stroke="none"/>
      <path d="M38.5 513 Q42 510 45 510.5 Q48 508 50.5 509.5 L56 506.5 Q59 506.5 65.5 512.5 V517.5 H38.5 Z" fill="#1a68e0" stroke="none"/>
      <!-- dokumen -->
      <path d="M42 551 H53.5 L61.5 559 V575 Q61.5 576.5 60 576.5 H43.5 Q42 576.5 42 575 Z M53.5 551 V559 H61.5" stroke-width="2.2"/>
      <!-- airdrop -->
      <path d="M49.7 621.9 A4.2 4.2 0 1 1 53.5 621.9 M47.6 626 A8.8 8.8 0 1 1 55.6 626 M45.7 629.8 A13 13 0 1 1 57.5 629.8" stroke-width="2.3"/>
      <circle cx="51.6" cy="618.2" r="2.4" fill="#1a68e0" stroke="none"/>
      <!-- aplikasi -->
      <path d="M53.2 664.3 L44.6 679 M50 664.3 L61 684 M38.6 679.4 H64.4" stroke-width="3"/>
      <circle cx="41.8" cy="684.3" r="1.7" fill="#1a68e0" stroke="none"/>
      <!-- cloud -->
      <path d="M42 804.5 H61 A6.3 6.3 0 0 0 61.5 792 A10 10 0 0 0 43 789.5 A7.8 7.8 0 0 0 42 804.5 Z" stroke="#3b9fcc" stroke-width="2.2"/>
    </svg>
  </div>
</div>

<!-- menubar -->
<div id="menubar">
  <div id="finderhl"></div>
  <div class="mb" style="left:114px;font-weight:bold">Finder</div>
  <div class="mb" style="left:237px">File</div>
  <div class="mb" style="left:321px">Edit</div>
  <div class="mb" style="left:409px">Lihat</div>
  <div class="mb" style="left:509px">Buka</div>
  <div class="mb" style="left:610px">Jendela</div>
  <div class="mb" style="left:745px">Bantuan</div>
</div>

<!-- dropdown -->
<div id="menu">
  <div class="mi" style="top:18.3px;letter-spacing:0.55px">Mengenai Finder</div>
  <div class="sep" style="top:64px"></div>
  <div class="abs" style="left:10px;top:76px;width:492px;height:44px;border-radius:8px;background:#3d96f7"></div>
  <div class="mi" style="top:84px;color:#fff">Preferensi...</div>
  <div class="sep" style="top:130px"></div>
  <div class="mi" style="top:151px">Kosongkan Tong Sampah...</div>
  <div class="sep" style="top:196px"></div>
  <div class="mi" style="top:216px">Layanan</div>
  <div class="sep" style="top:262px"></div>
  <div class="mi" style="top:282.2px">Sembunyikan Finder</div>
  <div class="mi" style="top:326px">Sembunyikan Lainnya</div>
  <div class="mi" style="top:370px;color:#a6a7ab">Tampilkan Semua</div>
<svg class="abs" style="left:430.5px;top:88px" width="21" height="21" fill="none" stroke="#fff" stroke-width="2.3"><path d="M6.5 3.5 V17.5 M14.5 3.5 V17.5 M3.5 6.5 H17.5 M3.5 14.5 H17.5 M3.5 6.5 A3 3 0 1 1 6.5 3.5 M14.5 3.5 A3 3 0 1 1 17.5 6.5 M17.5 14.5 A3 3 0 1 1 14.5 17.5 M6.5 17.5 A3 3 0 1 1 3.5 14.5"/></svg><svg class="abs" style="left:466px;top:102px" width="10" height="13"><polygon points="4.3,1.6 7,1.6 3.6,10.8 1.6,10.8" fill="#fff"/></svg><svg class="abs" style="left:404px;top:153px" width="86" height="22" fill="none" stroke="#9d9da0" stroke-width="1.9" stroke-linejoin="round"><path d="M11 1.5 L20 11 H15 V19.5 H7 V11 H2 Z"/><path d="M62 2 H80.5 V19 H62 L54 10.5 Z M65.5 6.5 L73 14.5 M73 6.5 L65.5 14.5"/></svg><svg class="abs" style="left:430.5px;top:154px" width="21" height="21" fill="none" stroke="#9d9da0" stroke-width="1.9"><path d="M6.5 3.5 V17.5 M14.5 3.5 V17.5 M3.5 6.5 H17.5 M3.5 14.5 H17.5 M3.5 6.5 A3 3 0 1 1 6.5 3.5 M14.5 3.5 A3 3 0 1 1 17.5 6.5 M17.5 14.5 A3 3 0 1 1 14.5 17.5 M6.5 17.5 A3 3 0 1 1 3.5 14.5"/></svg><svg class="abs" style="left:465px;top:221px" width="16" height="22" fill="none" stroke="#1a1a1a" stroke-width="3" stroke-linecap="round" stroke-linejoin="round"><path d="M3 2.5 L12 10 L3 17.5"/></svg><svg class="abs" style="left:430.5px;top:286px" width="21" height="21" fill="none" stroke="#9d9da0" stroke-width="1.9"><path d="M6.5 3.5 V17.5 M14.5 3.5 V17.5 M3.5 6.5 H17.5 M3.5 14.5 H17.5 M3.5 6.5 A3 3 0 1 1 6.5 3.5 M14.5 3.5 A3 3 0 1 1 17.5 6.5 M17.5 14.5 A3 3 0 1 1 14.5 17.5 M6.5 17.5 A3 3 0 1 1 3.5 14.5"/></svg><div class="abs" style="left:462px;top:282px;font-size:26px;line-height:30px;color:#9d9da0">H</div><svg class="abs" style="left:401px;top:330px" width="26" height="22" fill="none" stroke="#9d9da0" stroke-width="1.9"><path d="M1 2 H8 L16 19 H23 M14 2 H23"/></svg><svg class="abs" style="left:430.5px;top:330px" width="21" height="21" fill="none" stroke="#9d9da0" stroke-width="1.9"><path d="M6.5 3.5 V17.5 M14.5 3.5 V17.5 M3.5 6.5 H17.5 M3.5 14.5 H17.5 M3.5 6.5 A3 3 0 1 1 6.5 3.5 M14.5 3.5 A3 3 0 1 1 17.5 6.5 M17.5 14.5 A3 3 0 1 1 14.5 17.5 M6.5 17.5 A3 3 0 1 1 3.5 14.5"/></svg><div class="abs" style="left:462px;top:326px;font-size:26px;line-height:30px;color:#9d9da0">H</div>
</div>


<svg class="abs" style="left:0;top:0" width="600" height="200">
  <polygon points="289.5,130.7 347.5,71.6 357.6,99.4 451.7,68 455.8,81 363.5,113.6 371.8,142" fill="#ff2f0d"/>
</svg>
<svg class="abs" style="left:44px;top:5px" width="27" height="33" viewBox="0 0 28 34" preserveAspectRatio="none">
  <path fill="#e9eef4" d="M20.5 1.5 C20.8 4 19.8 6.2 18.5 7.6 C17.1 9.1 15.3 10 13.6 9.8 C13.3 7.5 14.4 5.3 15.6 4 C17 2.5 19 1.6 20.5 1.5 Z M26.8 25 C26 26.9 25.6 27.7 24.6 29.2 C23.2 31.3 21.3 33.6 19 33.7 C17 33.7 16.4 32.4 13.7 32.4 C11 32.4 10.3 33.7 8.3 33.7 C6 33.6 4.3 31.4 2.9 29.3 C-1 23.4 -1.4 16.5 1 12.8 C2.7 10.2 5.4 8.6 8 8.6 C10.6 8.6 12.2 10 14.4 10 C16.5 10 17.8 8.6 20.8 8.6 C23.1 8.6 25.5 9.9 27.2 12 C21.6 15.1 22.5 23.1 26.8 25 Z"/>
</svg>
</body></html>
